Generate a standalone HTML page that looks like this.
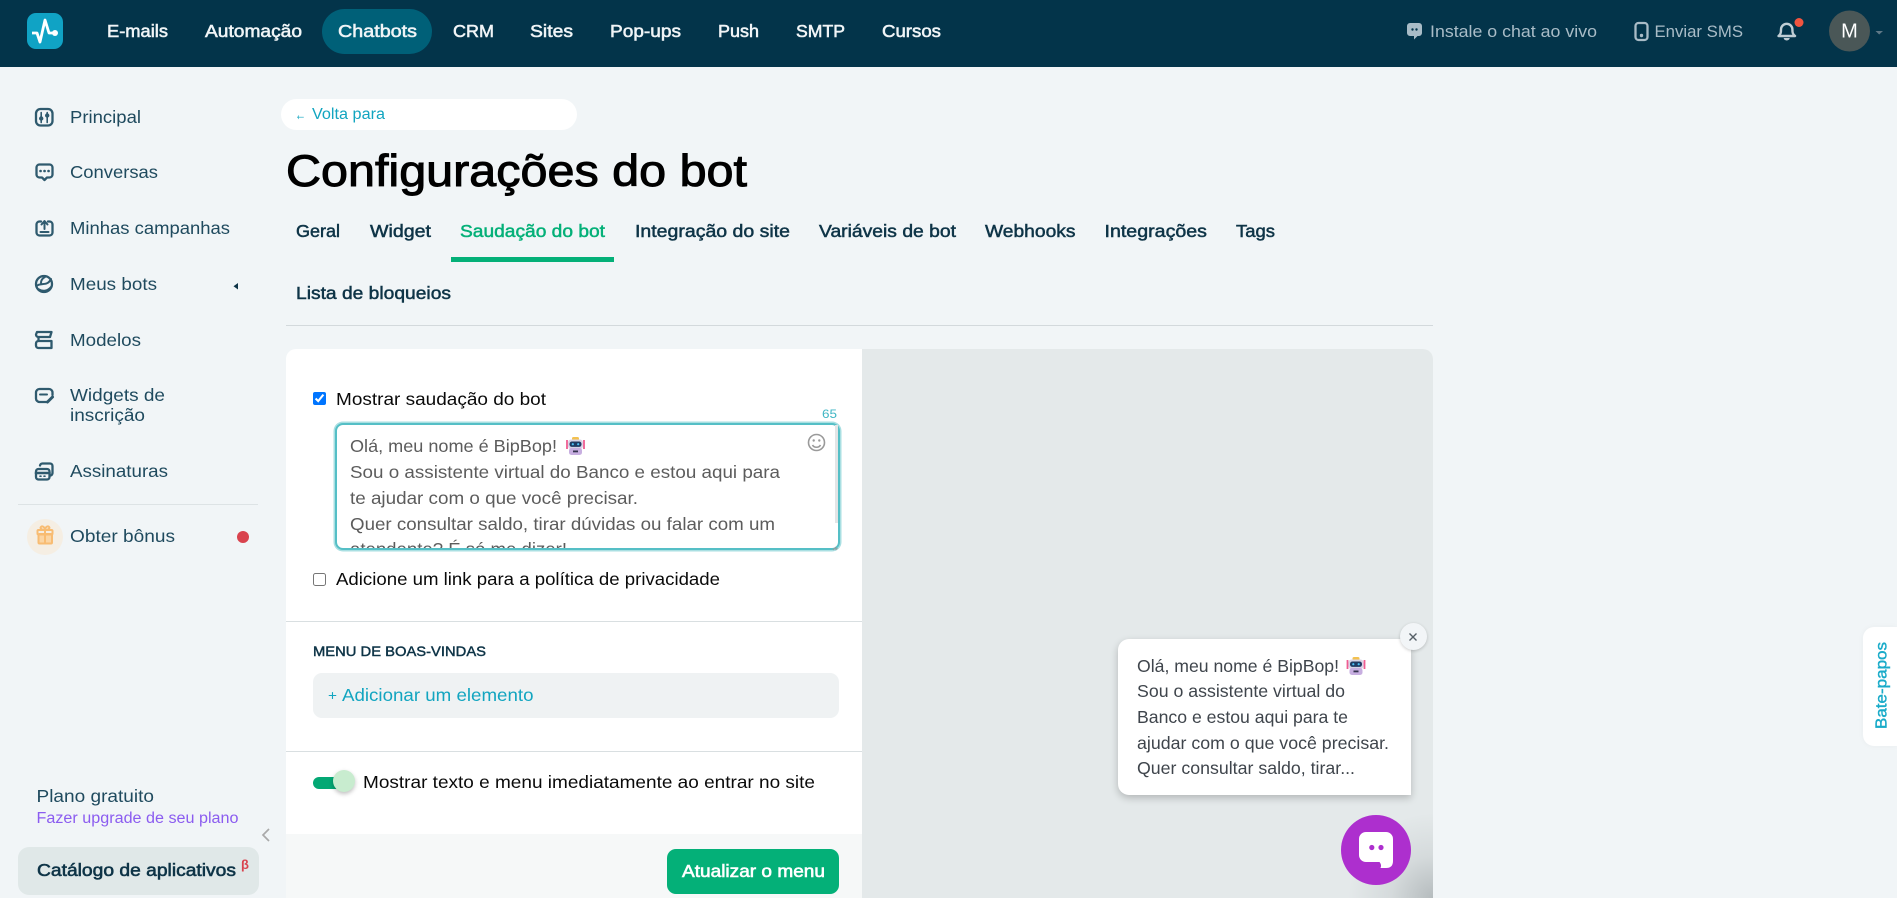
<!DOCTYPE html>
<html lang="pt-BR">
<head>
<meta charset="utf-8">
<title>Configurações do bot</title>
<style>
html,body{margin:0;padding:0;width:1897px;height:898px;overflow:hidden;background:#f1f5f7;}
body{position:relative;font-family:"Liberation Sans",sans-serif;}
.b{position:absolute;box-sizing:border-box;}
svg.o{position:absolute;left:0;top:0;width:1897px;height:898px;}
text{font-family:"Liberation Sans",sans-serif;}
.nv{font-size:17.5px;fill:#f1f5f7;stroke:#f1f5f7;stroke-width:.55px;}
.tp{font-size:16.5px;fill:#a9bcc7;}
.sb{font-size:17.5px;fill:#1f4a5e;}
.tb{font-size:17.5px;fill:#0e3447;stroke:#0e3447;stroke-width:.5px;}
.ta{font-size:17.5px;fill:#5c5c5c;}
.bu{font-size:17.5px;fill:#3f454c;}
.blk{font-size:17.5px;fill:#0a0a0a;}
.ic{fill:none;stroke:#2f5a6e;stroke-width:2.3;stroke-linecap:round;stroke-linejoin:round;}
input{position:absolute;margin:0;width:13px;height:13px;}
</style>
</head>
<body>
<div class="b" style="left:0;top:0;width:1897px;height:67px;background:#03344a;"></div>
<div class="b" style="left:322px;top:9px;width:110px;height:45px;border-radius:23px;background:#006078;"></div>
<div class="b" style="left:281px;top:99px;width:296px;height:31px;border-radius:16px;background:#fff;"></div>
<div class="b" style="left:18px;top:847px;width:241px;height:48px;border-radius:11px;background:#e0e8e8;"></div>
<div class="b" style="left:18px;top:504px;width:240px;height:1px;background:#dde3e5;"></div>
<div class="b" style="left:27px;top:519px;width:36px;height:36px;border-radius:50%;background:#f5eee3;"></div>
<div class="b" style="left:237px;top:531px;width:12px;height:12px;border-radius:50%;background:#d9434e;"></div>
<div class="b" style="left:451px;top:257px;width:163px;height:5px;background:#04b078;"></div>
<div class="b" style="left:286px;top:325px;width:1147px;height:1px;background:#d3d9dc;"></div>

<!-- card -->
<div class="b" style="left:286px;top:349px;width:1147px;height:549px;border-radius:10px 10px 0 0;background:#fff;overflow:hidden;">
  <div class="b" style="left:576px;top:0;width:571px;height:549px;background:radial-gradient(circle at 100% 100%,rgba(60,70,75,.28) 0,rgba(60,70,75,.09) 42px,rgba(60,70,75,0) 85px),#e4e9ea;"></div>
  <div class="b" style="left:0;top:272px;width:576px;height:1px;background:#d9dfe1;"></div>
  <div class="b" style="left:0;top:402px;width:576px;height:1px;background:#d9dfe1;"></div>
  <div class="b" style="left:0;top:485px;width:576px;height:64px;background:#f6f8f8;"></div>
</div>
<input type="checkbox" checked style="left:313px;top:392px;accent-color:#0075ff;">
<input type="checkbox" style="left:313px;top:573px;">
<div class="b" style="left:335px;top:423px;width:505px;height:127px;border:2px solid #55bfc6;border-radius:8px;background:#fff;box-shadow:0 0 0 1.500px #a9dfe2;"></div>
<div class="b" style="left:835px;top:425px;width:3px;height:98px;background:#e3e5e6;"></div>
<div class="b" style="left:313px;top:673px;width:526px;height:45px;border-radius:9px;background:#eff2f3;"></div>
<div class="b" style="left:313px;top:777px;width:32px;height:12px;border-radius:6px;background:#03a874;"></div>
<div class="b" style="left:333px;top:770px;width:22px;height:22px;border-radius:50%;background:#c8eccf;box-shadow:0 2px 4px rgba(0,0,0,.25);"></div>
<div class="b" style="left:667px;top:849px;width:172px;height:45px;border-radius:9px;background:#04b078;"></div>

<!-- preview bubble -->
<div class="b" style="left:1118px;top:639px;width:293px;height:156px;border-radius:11px 11px 0 11px;background:#fff;box-shadow:0 3px 8px rgba(0,0,0,.22);"></div>
<div class="b" style="left:1400px;top:623px;width:27px;height:27px;border-radius:50%;background:#f2f5f7;box-shadow:0 1px 3px rgba(0,0,0,.2);"></div>
<div class="b" style="left:1341px;top:815px;width:70px;height:70px;border-radius:50%;background:#ad2fce;"></div>
<div class="b" style="left:1863px;top:627px;width:34px;height:119px;border-radius:11px 0 0 11px;background:#fff;box-shadow:0 0 6px rgba(0,0,0,.04);"></div>

<svg class="o" viewBox="0 0 1897 898" xmlns="http://www.w3.org/2000/svg">
<defs>
  <clipPath id="tc"><rect x="337" y="425" width="497" height="123"/></clipPath>
  <g id="robot">
    <path d="M1 3V12M18 3V12" stroke="#ef5d92" stroke-width="1.800" fill="none"/>
    <rect x="6" y="0" width="7" height="3.500" rx="1.500" fill="#f3c14f"/>
    <rect x="2" y="2.500" width="15" height="9.500" rx="3" fill="#d9d3e6"/>
    <rect x="3.500" y="4.500" width="12" height="5.400" rx="2.400" fill="#1f3a63"/>
    <circle cx="6.800" cy="7.200" r="1.100" fill="#4fc3f7"/><circle cx="12.200" cy="7.200" r="1.100" fill="#4fc3f7"/>
    <rect x="3" y="11" width="13" height="7" rx="2.500" fill="#c7aee0"/>
    <rect x="7" y="13.500" width="5" height="1.800" fill="#33334d"/>
  </g>
</defs>

<!-- logo -->
<rect x="27" y="13" width="36" height="36" rx="9" fill="#10a3c5"/>
<path d="M32 33H37L40 42L45 20L49 33H55" fill="none" stroke="#fff" stroke-width="2.800" stroke-linejoin="round"/>
<circle cx="55" cy="33" r="3" fill="#fff"/>

<!-- top nav -->
<text class="nv" x="107" y="37" textLength="61" lengthAdjust="spacingAndGlyphs">E-mails</text>
<text class="nv" x="205" y="37" textLength="97" lengthAdjust="spacingAndGlyphs">Automação</text>
<text class="nv" x="338" y="37" textLength="79" lengthAdjust="spacingAndGlyphs">Chatbots</text>
<text class="nv" x="453" y="37" textLength="41" lengthAdjust="spacingAndGlyphs">CRM</text>
<text class="nv" x="530" y="37" textLength="43" lengthAdjust="spacingAndGlyphs">Sites</text>
<text class="nv" x="610" y="37" textLength="71" lengthAdjust="spacingAndGlyphs">Pop-ups</text>
<text class="nv" x="718" y="37" textLength="41" lengthAdjust="spacingAndGlyphs">Push</text>
<text class="nv" x="796" y="37" textLength="49" lengthAdjust="spacingAndGlyphs">SMTP</text>
<text class="nv" x="882" y="37" textLength="59" lengthAdjust="spacingAndGlyphs">Cursos</text>

<!-- top right -->
<path d="M1410 23H1419A3 3 0 0 1 1422 26V33A3 3 0 0 1 1419 36H1417.500L1414 39.500V36H1410A3 3 0 0 1 1407 33V26A3 3 0 0 1 1410 23Z" fill="#a9bcc7"/>
<circle cx="1412.500" cy="29.500" r="1.200" fill="#03344a"/><circle cx="1416.500" cy="29.500" r="1.200" fill="#03344a"/>
<text class="tp" x="1430" y="37" textLength="167" lengthAdjust="spacingAndGlyphs">Instale o chat ao vivo</text>
<rect x="1635.500" y="23" width="12" height="17" rx="3" fill="none" stroke="#a9bcc7" stroke-width="2.300"/>
<circle cx="1641.500" cy="35.500" r="1.700" fill="#a9bcc7"/>
<text class="tp" x="1654.500" y="37" textLength="88.500" lengthAdjust="spacingAndGlyphs">Enviar SMS</text>
<path d="M1778.500 36C1781 34 1781 32 1781 29.500A5.700 5.700 0 0 1 1792.400 29.500C1792.400 32 1792.400 34 1795 36Z" fill="none" stroke="#c0ced5" stroke-width="2.400" stroke-linejoin="round"/>
<path d="M1783.700 38H1789.700A3 2.500 0 0 1 1783.700 38Z" fill="#c0ced5"/>
<circle cx="1799" cy="22.500" r="4.500" fill="#f1543f"/>
<circle cx="1849.500" cy="31" r="20.500" fill="#4a5757"/>
<text x="1849.500" y="37.500" text-anchor="middle" font-size="20" fill="#fff">M</text>
<path d="M1875.500 31H1883L1879.200 34.500Z" fill="#5f7887"/>

<!-- sidebar icons -->
<g class="ic">
  <rect x="36" y="109" width="16.500" height="16.500" rx="4.500"/>
  <path d="M41.200 112.500V122.500M47.200 112.500V122.500" stroke-width="1.600"/>
  <circle cx="41.200" cy="118.500" r="1.700" fill="#2f5a6e" stroke-width="1"/><circle cx="47.200" cy="115.500" r="1.700" fill="#2f5a6e" stroke-width="1"/>

  <path d="M39.500 164.500H49.500A3 3 0 0 1 52.500 167.500V174.500A3 3 0 0 1 49.500 177.500H47L44.500 180L42 177.500H39.500A3 3 0 0 1 36.500 174.500V167.500A3 3 0 0 1 39.500 164.500Z"/>
  <path d="M40.500 171H40.600M44.500 171H44.600M48.500 171H48.600" stroke-width="2.600"/>

  <path d="M41 221.500H39.500A3 3 0 0 0 36.500 224.500V232.500A3 3 0 0 0 39.500 235.500H49.500A3 3 0 0 0 52.500 232.500V224.500A3 3 0 0 0 49.500 221.500H48"/>
  <path d="M44.500 229V221.500M41.500 224.500L44.500 221L47.500 224.500M40.500 232H48.500" stroke-width="2"/>

  <circle cx="44" cy="284" r="8"/>
  <path d="M36.500 286C41 282 47 287 51 279M41 283C41 280 43 278 45 277" stroke-width="2"/>
  <path d="M38 289C43 292 48 291 51 287" stroke-width="2"/>

  <path d="M37 332H51.500L50 337H38.500A2.500 2.500 0 0 1 36 334.500ZM38.500 341H51.500M38.500 341A2.500 2.500 0 0 0 36 343.500V345.500A2.500 2.500 0 0 0 38.500 348H51.500M38.500 337V341M51.500 341V348"/>

  <path d="M47 402H39.500A3.500 3.500 0 0 1 36 398.500V392.500A3.500 3.500 0 0 1 39.500 389H49A3.500 3.500 0 0 1 52.500 392.500V395"/>
  <path d="M40 394.500H47" stroke-width="2"/>
  <path d="M47.500 402L52.500 397" stroke-width="3"/>

  <rect x="36" y="469" width="13.500" height="10.500" rx="2.500"/>
  <path d="M36 473H49.500" stroke-width="2.600"/>
  <path d="M40 476.200H41M44 476.200H45" stroke-width="1.600"/>
  <path d="M40 465.500A2.500 2.500 0 0 1 42.500 463.500H50A2.500 2.500 0 0 1 52.500 466V473A2.500 2.500 0 0 1 50.500 475.500"/>
</g>
<path d="M238 283V289.500L233.500 286.200Z" fill="#0e3447"/>
<!-- gift -->
<g fill="none" stroke="#f8bc72" stroke-width="2" stroke-linejoin="round">
  <rect x="38.500" y="534" width="13.500" height="9.500" rx="1" fill="#fbd5a3"/>
  <rect x="37.500" y="530" width="15" height="4.500" rx="1"/>
  <path d="M45 530V543.500M45 530C41 530 40 528 41 527C42 525.500 45 527 45 530C45 527 48 525.500 49 527C50 528 49 530 45 530Z"/>
</g>

<!-- sidebar text -->
<text class="sb" x="70" y="123" textLength="71" lengthAdjust="spacingAndGlyphs">Principal</text>
<text class="sb" x="70" y="178" textLength="88" lengthAdjust="spacingAndGlyphs">Conversas</text>
<text class="sb" x="70" y="234" textLength="160" lengthAdjust="spacingAndGlyphs">Minhas campanhas</text>
<text class="sb" x="70" y="290" textLength="87" lengthAdjust="spacingAndGlyphs">Meus bots</text>
<text class="sb" x="70" y="346" textLength="71" lengthAdjust="spacingAndGlyphs">Modelos</text>
<text class="sb" x="70" y="401" textLength="95" lengthAdjust="spacingAndGlyphs">Widgets de</text>
<text class="sb" x="70" y="421" textLength="75" lengthAdjust="spacingAndGlyphs">inscrição</text>
<text class="sb" x="70" y="477" textLength="98" lengthAdjust="spacingAndGlyphs">Assinaturas</text>
<text class="sb" x="70" y="542" textLength="105" lengthAdjust="spacingAndGlyphs">Obter bônus</text>
<text class="sb" x="36.500" y="802" textLength="117.500" lengthAdjust="spacingAndGlyphs">Plano gratuito</text>
<text x="36.500" y="823" font-size="15.500" fill="#8b5cf0" textLength="202" lengthAdjust="spacingAndGlyphs">Fazer upgrade de seu plano</text>
<path d="M269 829L263 835L269 841" fill="none" stroke="#a9a9a9" stroke-width="1.700"/>
<text x="37" y="876" font-size="17.500" fill="#0e3447" stroke="#0e3447" stroke-width=".6" textLength="199" lengthAdjust="spacingAndGlyphs">Catálogo de aplicativos</text>
<text x="241" y="869" font-size="13" font-weight="700" fill="#d9434e">β</text>

<!-- header -->
<text x="295" y="120" font-size="17" fill="#12a5c0" textLength="11" lengthAdjust="spacingAndGlyphs">←</text>
<text x="312" y="119" font-size="15.500" fill="#12a5c0" textLength="73" lengthAdjust="spacingAndGlyphs">Volta para</text>
<text x="286" y="186" font-size="44.500" fill="#000" stroke="#000" stroke-width="1" textLength="461" lengthAdjust="spacingAndGlyphs">Configurações do bot</text>

<!-- tabs -->
<text class="tb" x="296" y="237" textLength="44" lengthAdjust="spacingAndGlyphs">Geral</text>
<text class="tb" x="370" y="237" textLength="61" lengthAdjust="spacingAndGlyphs">Widget</text>
<text class="tb" x="460" y="237" textLength="145" lengthAdjust="spacingAndGlyphs" style="fill:#04b078;stroke:#04b078">Saudação do bot</text>
<text class="tb" x="635" y="237" textLength="155" lengthAdjust="spacingAndGlyphs">Integração do site</text>
<text class="tb" x="819" y="237" textLength="137" lengthAdjust="spacingAndGlyphs">Variáveis de bot</text>
<text class="tb" x="985" y="237" textLength="90.500" lengthAdjust="spacingAndGlyphs">Webhooks</text>
<text class="tb" x="1104.500" y="237" textLength="102.500" lengthAdjust="spacingAndGlyphs">Integrações</text>
<text class="tb" x="1236" y="237" textLength="39" lengthAdjust="spacingAndGlyphs">Tags</text>
<text class="tb" x="296" y="299" textLength="155" lengthAdjust="spacingAndGlyphs">Lista de bloqueios</text>

<!-- form -->
<text class="blk" x="336" y="405" textLength="210" lengthAdjust="spacingAndGlyphs">Mostrar saudação do bot</text>
<text x="822" y="418" font-size="12" fill="#3fb6c4" textLength="15" lengthAdjust="spacingAndGlyphs">65</text>
<g clip-path="url(#tc)">
  <text class="ta" x="350" y="452" textLength="207" lengthAdjust="spacingAndGlyphs">Olá, meu nome é BipBop!</text>
  <text class="ta" x="350" y="478" textLength="430" lengthAdjust="spacingAndGlyphs">Sou o assistente virtual do Banco e estou aqui para</text>
  <text class="ta" x="350" y="504" textLength="288" lengthAdjust="spacingAndGlyphs">te ajudar com o que você precisar.</text>
  <text class="ta" x="350" y="530" textLength="425" lengthAdjust="spacingAndGlyphs">Quer consultar saldo, tirar dúvidas ou falar com um</text>
  <text class="ta" x="350" y="555" textLength="217" lengthAdjust="spacingAndGlyphs">atendente? É só me dizer!</text>
</g>
<use href="#robot" x="566" y="437"/>
<g fill="none" stroke="#9a9a9a" stroke-width="1.600">
  <circle cx="816.500" cy="442.500" r="8"/>
  <path d="M812.500 445C814 448 819 448 820.500 445"/>
</g>
<circle cx="813.700" cy="440.500" r="1.200" fill="#9a9a9a"/><circle cx="819.300" cy="440.500" r="1.200" fill="#9a9a9a"/>
<path d="M836 547L833 550M837.500 548L835.500 550" stroke="#999" stroke-width="1"/>
<text class="blk" x="336" y="585" textLength="384" lengthAdjust="spacingAndGlyphs">Adicione um link para a política de privacidade</text>
<text x="313" y="656" font-size="14" fill="#0e3447" stroke="#0e3447" stroke-width=".45" textLength="173" lengthAdjust="spacingAndGlyphs">MENU DE BOAS-VINDAS</text>
<text x="328" y="700" font-size="14" fill="#12a5c0" textLength="9" lengthAdjust="spacingAndGlyphs">+</text>
<text x="342" y="701" font-size="17.500" fill="#12a5c0" textLength="191.500" lengthAdjust="spacingAndGlyphs">Adicionar um elemento</text>
<text class="blk" x="363" y="788" textLength="452" lengthAdjust="spacingAndGlyphs">Mostrar texto e menu imediatamente ao entrar no site</text>
<text x="682" y="877" font-size="17.500" fill="#fff" stroke="#fff" stroke-width=".6" textLength="143" lengthAdjust="spacingAndGlyphs">Atualizar o menu</text>

<!-- bubble -->
<text class="bu" x="1137" y="672" textLength="202" lengthAdjust="spacingAndGlyphs">Olá, meu nome é BipBop!</text>
<use href="#robot" x="1346.500" y="657"/>
<text class="bu" x="1137" y="697" textLength="208" lengthAdjust="spacingAndGlyphs">Sou o assistente virtual do</text>
<text class="bu" x="1137" y="723" textLength="211" lengthAdjust="spacingAndGlyphs">Banco e estou aqui para te</text>
<text class="bu" x="1137" y="749" textLength="252" lengthAdjust="spacingAndGlyphs">ajudar com o que você precisar.</text>
<text class="bu" x="1137" y="774" textLength="218" lengthAdjust="spacingAndGlyphs">Quer consultar saldo, tirar...</text>
<path d="M1409.500 633.500L1416.500 640.500M1416.500 633.500L1409.500 640.500" stroke="#555f66" stroke-width="1.400"/>
<path d="M1366 832H1386A7 7 0 0 1 1393 839V861Q1393 868 1386 868H1380.500Q1382 865 1379.500 862H1366A7 7 0 0 1 1359 855V839A7 7 0 0 1 1366 832Z" fill="#fff"/>
<circle cx="1371.800" cy="847.500" r="2.600" fill="#ad2fce"/><circle cx="1381" cy="847.500" r="2.600" fill="#ad2fce"/>

<!-- side tab -->
<text transform="translate(1886.500 729) rotate(-90)" x="0" y="0" font-size="15.500" fill="#19abc9" stroke="#19abc9" stroke-width=".4" textLength="87" lengthAdjust="spacingAndGlyphs">Bate-papos</text>
</svg>
</body>
</html>
